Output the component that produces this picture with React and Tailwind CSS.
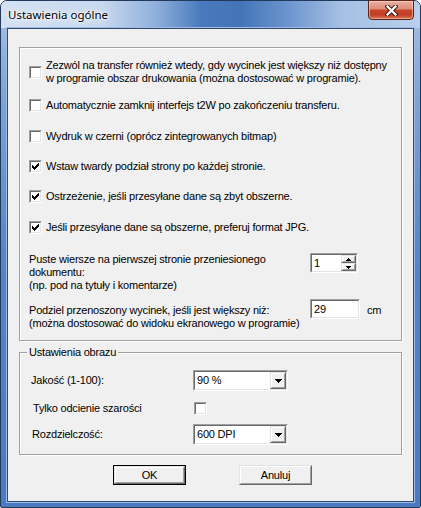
import React from 'react';

const font = "font-['Liberation_Sans',Arial,sans-serif] text-[11px] leading-[13px] tracking-[-0.2px] text-black";

function Sunken({ className = '', children }) {
  return (
    <div className={`border border-t-[#a0a0a0] border-l-[#a0a0a0] border-b-white border-r-white ${className}`}>
      <div className="h-full w-full border border-t-[#696969] border-l-[#696969] border-b-[#e3e3e3] border-r-[#e3e3e3] bg-white">
        {children}
      </div>
    </div>
  );
}

function Raised({ className = '', children }) {
  return (
    <div className={`border border-t-[#e3e3e3] border-l-[#e3e3e3] border-b-[#696969] border-r-[#696969] ${className}`}>
      <div className="flex h-full w-full items-center justify-center border border-t-white border-l-white border-b-[#a0a0a0] border-r-[#a0a0a0] bg-[#f0f0f0]">
        {children}
      </div>
    </div>
  );
}

function Check({ checked }) {
  return (
    <Sunken className="h-[13px] w-[13px] shrink-0">
      {checked && (
        <svg width="9" height="9" viewBox="0 0 9 9" shapeRendering="crispEdges">
          <path
            fill="#000"
            d="M7 1h1v1h-1z M6 2h2v1h-2z M1 3h1v1h-1z M5 3h3v1h-3z M1 4h2v1h-2z M4 4h3v1h-3z M1 5h5v1h-5z M2 6h3v1h-3z M3 7h1v1h-1z"
          />
        </svg>
      )}
    </Sunken>
  );
}

function CheckRow({ checked, className = '', children }) {
  return (
    <div className={`flex items-center gap-[4px] ${className}`}>
      <Check checked={checked} />
      <div>{children}</div>
    </div>
  );
}

function Combo({ value }) {
  return (
    <Sunken className="h-[21px] w-[95px]">
      <div className="flex h-full items-center">
        <span className="flex-1 pl-[2px]">{value}</span>
        <Raised className="h-[17px] w-[16px]">
          <svg width="7" height="4" viewBox="0 0 7 4" shapeRendering="crispEdges">
            <path fill="#000" d="M0 0h7v1h-7z M1 1h5v1h-5z M2 2h3v1h-3z M3 3h1v1h-1z" />
          </svg>
        </Raised>
      </div>
    </Sunken>
  );
}

function Group({ className = '', title, children }) {
  return (
    <div className={`relative border border-[#a0a0a0] shadow-[inset_1px_1px_0_#fff,1px_1px_0_#fff] ${className}`}>
      {title && (
        <span className="absolute left-[7px] top-[-7px] bg-[#f0f0f0] px-[2px]">{title}</span>
      )}
      {children}
    </div>
  );
}

export default function App() {
  return (
    <div className={`relative flex h-[508px] w-[421px] flex-col rounded-t-[7px] rounded-b-[2px] border border-[#23395a] bg-[linear-gradient(180deg,#a9c3e6_0px,#7fa5d7_90px,#5385c7_260px,#4a7bc1_100%)] ${font}`}>
      {/* title bar */}
      <div className="flex h-[27px] shrink-0 items-center rounded-t-[6px] bg-[linear-gradient(90deg,#d3e1f2_0px,#c8d9ef_100px,#8fb0dc_155px,#4a7abd_200px,#4474b8_240px,#6f97cf_290px,#a5c0e4_340px,#b9cfec_100%)] pl-[7px]">
        <span className="font-['Noto_Sans',sans-serif] text-[11.5px] leading-[16px] tracking-normal text-black [text-shadow:0_0_8px_#fff,0_0_4px_#fff,0_0_2px_#fff]">
          Ustawienia ogólne
        </span>
      </div>

      {/* close button */}
      <div className="absolute right-[6px] top-[-1px] flex h-[20px] w-[46px] items-center justify-center rounded-b-[4px] border border-[#5b2519] bg-[linear-gradient(180deg,#eab0a2_0%,#dc8a74_45%,#c8462c_50%,#c23d25_75%,#d87552_100%)] shadow-[inset_0_0_0_1px_rgba(255,220,210,0.5)]">
        <svg width="13" height="11" viewBox="0 0 13 11">
          <path d="M2.5 1.5 L10.5 9.5 M10.5 1.5 L2.5 9.5" stroke="#3b1d18" strokeWidth="4.2" strokeLinecap="square" />
          <path d="M2.5 1.5 L10.5 9.5 M10.5 1.5 L2.5 9.5" stroke="#fff" strokeWidth="2.2" strokeLinecap="square" />
        </svg>
      </div>

      {/* client area */}
      <div className="mx-[6px] h-[474px] border border-[#33496b] bg-[#f0f0f0] shadow-[0_0_0_1px_#9dbbe4]">
        <Group className="ml-[11px] mt-[18px] h-[294px] w-[383px]">
          <div className="flex flex-col pl-[9px] pt-[11px]">
            <CheckRow>
              Zezwól na transfer również wtedy, gdy wycinek jest większy niż dostępny
              <br />
              w programie obszar drukowania (można dostosować w programie).
            </CheckRow>
            <CheckRow className="mt-[14px]">
              Automatycznie zamknij interfejs t2W po zakończeniu transferu.
            </CheckRow>
            <CheckRow className="mt-[18px]">Wydruk w czerni (oprócz zintegrowanych bitmap)</CheckRow>
            <CheckRow checked className="mt-[17px]">
              Wstaw twardy podział strony po każdej stronie.
            </CheckRow>
            <CheckRow checked className="mt-[17px]">
              Ostrzeżenie, jeśli przesyłane dane są zbyt obszerne.
            </CheckRow>
            <CheckRow checked className="mt-[18px]">
              Jeśli przesyłane dane są obszerne, preferuj format JPG.
            </CheckRow>

            <div className="mt-[19px] flex items-start">
              <div className="w-[281px]">
                Puste wiersze na pierwszej stronie przeniesionego
                <br />
                dokumentu:
                <br />
                (np. pod na tytuły i komentarze)
              </div>
              <Sunken className="h-[20px] w-[48px]">
                <div className="flex h-full">
                  <span className="flex-1 pl-[2px] pt-[2px]">1</span>
                  <div className="flex w-[15px] flex-col">
                    <Raised className="h-[8px] w-[15px]">
                      <svg width="5" height="3" viewBox="0 0 5 3" shapeRendering="crispEdges">
                        <path fill="#000" d="M2 0h1v1h-1z M1 1h3v1h-3z M0 2h5v1h-5z" />
                      </svg>
                    </Raised>
                    <Raised className="h-[8px] w-[15px]">
                      <svg width="5" height="3" viewBox="0 0 5 3" shapeRendering="crispEdges">
                        <path fill="#000" d="M0 0h5v1h-5z M1 1h3v1h-3z M2 2h1v1h-1z" />
                      </svg>
                    </Raised>
                  </div>
                </div>
              </Sunken>
            </div>

            <div className="mt-[12px] flex items-start">
              <div className="w-[281px]">
                Podziel przenoszony wycinek, jeśli jest większy niż:
                <br />
                (można dostosować do widoku ekranowego w programie)
              </div>
              <Sunken className="-mt-[5px] h-[20px] w-[50px]">
                <div className="pl-[2px] pt-[2px]">29</div>
              </Sunken>
              <span className="ml-[7px]">cm</span>
            </div>
          </div>
        </Group>

        <Group title="Ustawienia obrazu" className="ml-[11px] mt-[11px] h-[103px] w-[383px]">
          <div className="flex flex-col pl-[11px] pt-[17px]">
            <div className="flex h-[21px] items-center">
              <span className="w-[162px]">Jakość (1-100):</span>
              <Combo value="90 %" />
            </div>
            <div className="mt-[11px] flex h-[13px] items-center">
              <span className="w-[163px] pl-[2px]">Tylko odcienie szarości</span>
              <Check />
            </div>
            <div className="mt-[9px] flex h-[21px] items-center">
              <span className="w-[162px] pl-[1px]">Rozdzielczość:</span>
              <Combo value="600 DPI" />
            </div>
          </div>
        </Group>

        <div className="ml-[105px] mt-[10px] flex gap-[53px]">
          <div className="border border-black">
            <Raised className="h-[18px] w-[71px]">OK</Raised>
          </div>
          <Raised className="h-[20px] w-[73px]">Anuluj</Raised>
        </div>
      </div>
    </div>
  );
}
